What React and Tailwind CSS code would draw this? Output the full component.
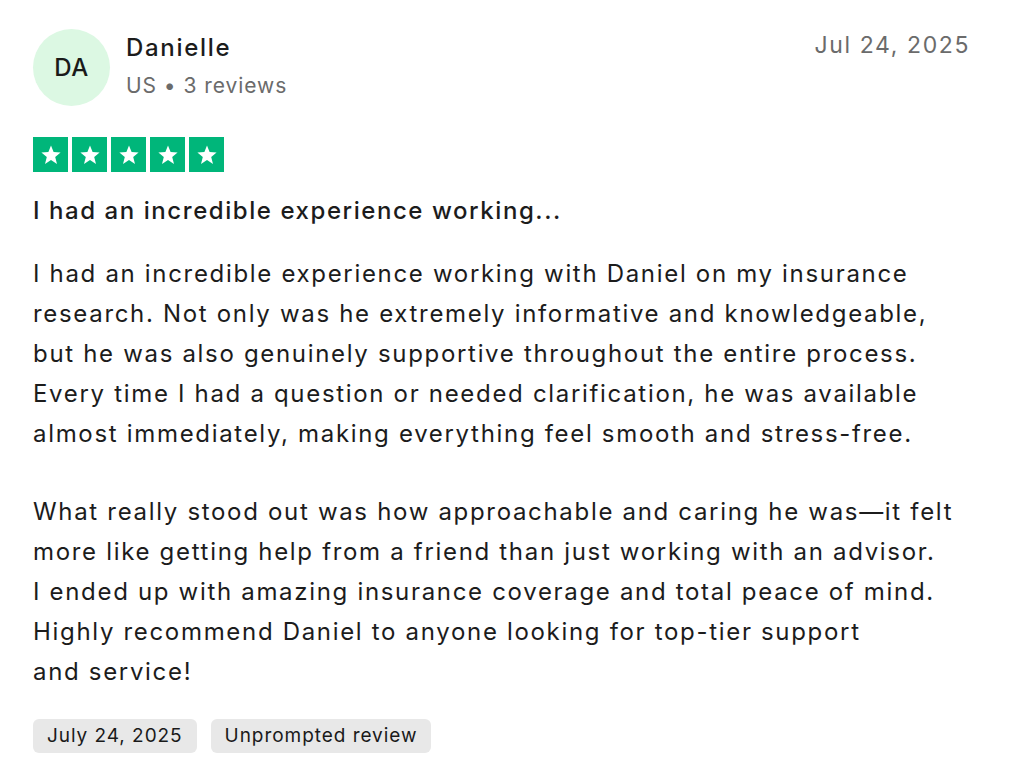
const lines1 = [
  'I had an incredible experience working with Daniel on my insurance',
  'research. Not only was he extremely informative and knowledgeable,',
  'but he was also genuinely supportive throughout the entire process.',
  'Every time I had a question or needed clarification, he was available',
  'almost immediately, making everything feel smooth and stress-free.',
];

const lines2 = [
  'What really stood out was how approachable and caring he was\u2014it felt',
  'more like getting help from a friend than just working with an advisor.',
  'I ended up with amazing insurance coverage and total peace of mind.',
  'Highly recommend Daniel to anyone looking for top-tier support',
  'and service!',
];

function Star() {
  return (
    <div className="w-[35px] h-[35px] bg-[#00b67a] flex items-center justify-center">
      <svg viewBox="0 0 24 24" className="w-[24px] h-[24px]" fill="white">
        <path d="M12 2.5l2.6 6.6 7 .4-5.4 4.5 1.8 6.9L12 17l-6 3.9 1.8-6.9L2.4 9.5l7-.4z" />
      </svg>
    </div>
  );
}

export default function App() {
  return (
    <div className="w-[1024px] h-[778px] bg-white px-[33px] pt-[29px] font-['Inter',sans-serif] text-[#1c1c1c]">
      <div className="flex items-start justify-between">
        <div className="flex items-center gap-[16px]">
          <div className="w-[77px] h-[77px] rounded-full bg-[#dcf8e3] flex items-center justify-center text-[24px] tracking-[0.02em] font-medium text-[#1a1a1a]">
            DA
          </div>
          <div className="flex flex-col -mt-[2px]">
            <span className="text-[24px] leading-[32px] tracking-[0.07em] font-medium">Danielle</span>
            <span className="text-[21px] leading-[32px] tracking-[0.045em] text-[#6b6b6b] mt-[6px]">US • 3 reviews</span>
          </div>
        </div>
        <span className="text-[23px] leading-[32px] tracking-[0.07em] text-[#6b6b6b] mr-[21px]">Jul 24, 2025</span>
      </div>

      <div className="flex gap-[4px] mt-[31px]">
        <Star />
        <Star />
        <Star />
        <Star />
        <Star />
      </div>

      <h2 className="text-[24px] leading-[32px] tracking-[0.065em] font-medium mt-[23px]">
        I had an incredible experience working...
      </h2>

      <div className="text-[24px] leading-[40px] tracking-[0.07em] mt-[27px]">
        {lines1.map((l) => (
          <div key={l} className="whitespace-nowrap">{l}</div>
        ))}
        <div className="h-[38px]" />
        {lines2.map((l) => (
          <div key={l} className="whitespace-nowrap">{l}</div>
        ))}
      </div>

      <div className="flex gap-[14px] mt-[27px]">
        <span className="bg-[#e8e8e8] rounded-[6px] px-[14px] h-[34px] flex items-center text-[19px] tracking-[0.05em] text-[#1a1a1a]">
          July 24, 2025
        </span>
        <span className="bg-[#e8e8e8] rounded-[6px] px-[14px] h-[34px] flex items-center text-[19px] tracking-[0.05em] text-[#1a1a1a]">
          Unprompted review
        </span>
      </div>
    </div>
  );
}
